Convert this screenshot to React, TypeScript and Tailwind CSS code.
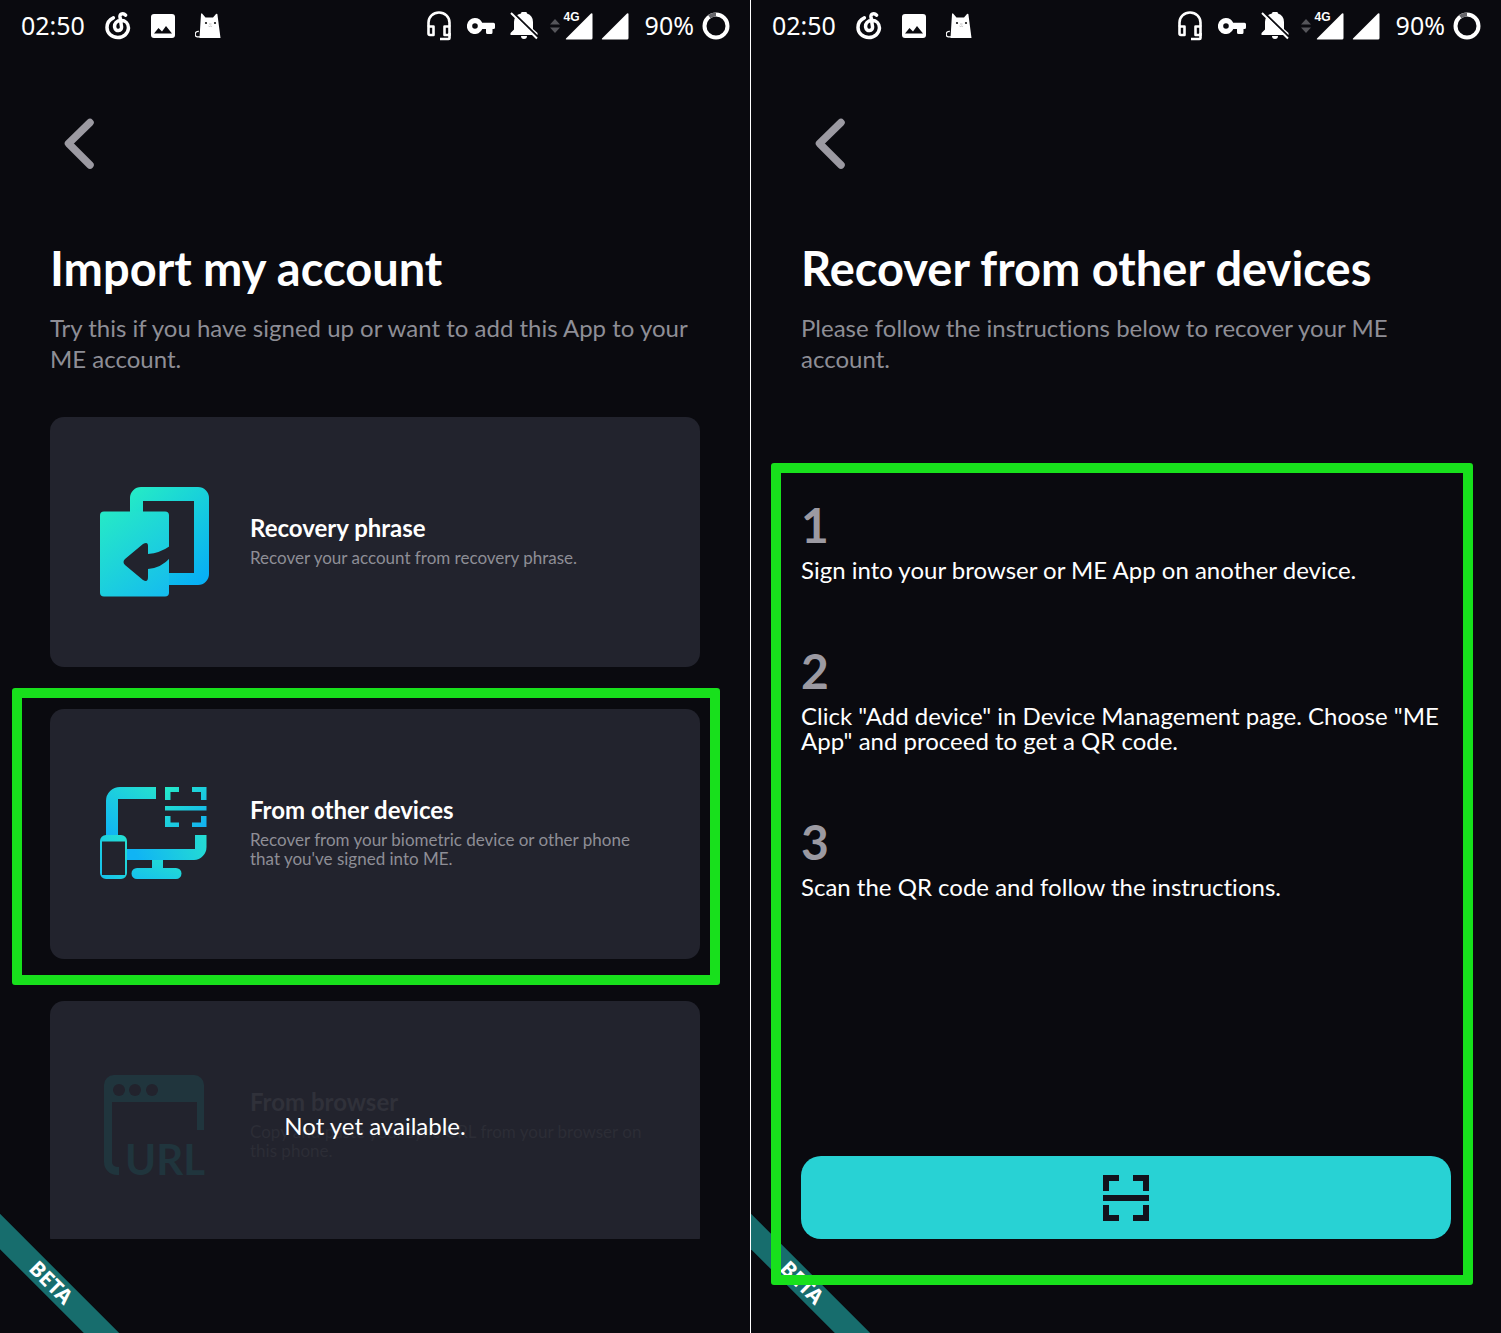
import type { ReactNode } from "react";

function MusicIcon() {
  return (
    <svg className="h-7 w-[26px]" viewBox="0 0 26 28" fill="none" stroke="#fff" strokeWidth="3.500" strokeLinecap="round" aria-hidden="true">
      <path d="M20.500 3.200C18.500.8 14.600 1.600 15 5L16.500 14.500C17.200 19.500 10.500 20 9.700 15.500C9 11.500 12 8.300 16 8.300C20.500 8.500 23.500 11.800 23.500 16C23.200 21.500 18.500 25.500 12.800 25.500C6.500 25.500 2 21 2 15.500C2 11 4.500 7.500 8.300 5.800" />
    </svg>
  );
}

function HeadsetIcon() {
  return (
    <svg className="h-[30px] w-6" viewBox="0 0 24 30" fill="none" stroke="#fff" strokeWidth="2.600" aria-hidden="true">
      <path d="M1.500 15.500V11.500a10.500 10 0 0 1 21 0v4" />
      <path d="M1.500 15.500H6.500v8.500H3a1.500 1.500 0 0 1-1.500-1.500z" strokeLinejoin="round" />
      <path d="M22.500 15.500H17.500v8.500h5z" strokeLinejoin="round" />
      <path d="M22.500 22v5a1 1 0 0 1-1 1H13" />
    </svg>
  );
}

function KeyIcon() {
  return (
    <svg className="h-4 w-7" viewBox="0 0 28 16" aria-hidden="true">
      <path
        fill="#fff"
        fillRule="evenodd"
        d="M8 0a8 8 0 0 1 7.200 4.800H26.500a1.500 1.500 0 0 1 1.500 1.500v3.200a1.500 1.500 0 0 1-1.500 1.500H25.500v3.500a1.500 1.500 0 0 1-1.500 1.500h-3.500a1.500 1.500 0 0 1-1.500-1.500V11h-3.700A8 8 0 1 1 8 0zM8 5.200a2.800 2.800 0 1 0 0 5.600a2.800 2.800 0 0 0 0-5.600z"
      />
    </svg>
  );
}

function BellOffIcon() {
  return (
    <svg className="h-7 w-7" viewBox="0 0 28 28" aria-hidden="true">
      <path
        fill="#fff"
        d="M11 1.500a3 2 0 0 1 6 0A9 9 0 0 1 23 10V17l4.500 4v2H0.500v-2l3.500-3.500V10A9 9 0 0 1 11 1.500zM11 24h6a3 3 0 0 1-6 0z"
      />
      <path d="M3 0.500L29 26" stroke="#0a0a0f" strokeWidth="2" />
      <path d="M1 1L27 26.500" stroke="#fff" strokeWidth="2" />
    </svg>
  );
}

function CatIcon() {
  return (
    <svg className="h-[26px] w-[26px]" viewBox="0 0 26 26" aria-hidden="true">
      <path fill="#fff" d="M6 1.200Q6.500-.5 7.500 1L10.500 4.500h7.500L21 1Q22.500 0 22.500 2L25.500 25H4.500Z" />
      <path d="M3.800 18.500a2.600 2.600 0 1 0-1.500 5.400H8" fill="none" stroke="#fff" strokeWidth="1.300" />
      <circle cx="11" cy="10" r="1.100" fill="#111" />
      <circle cx="20" cy="10" r="1.100" fill="#111" />
      <path d="M14 11h2.500M13.500 13q1 1 1.800 0q.8 1 1.800 0" stroke="#999" strokeWidth=".6" fill="none" />
    </svg>
  );
}

function PictureIcon() {
  return (
    <svg className="h-6 w-6" viewBox="0 0 24 24" aria-hidden="true">
      <rect width="24" height="24" rx="3" fill="#fff" />
      <path d="M3 19.500l4.500-5.500 3.500 3.500 4-5.500 6 7.500z" fill="#0a0a0f" />
    </svg>
  );
}

function SignalIcon() {
  return (
    <svg className="h-7 w-7" viewBox="0 0 28 28" aria-hidden="true">
      <path d="M1 26.500L26 1.500q1.500-1 1.500 1V26a1.500 1.500 0 0 1-1.500 1.500H1.500q-1.300 0-.5-1z" fill="#fff" />
    </svg>
  );
}

function StatusBar() {
  return (
    <header className="flex h-[51px] shrink-0 items-center justify-between pr-5 pl-[21px] font-['Noto_Sans'] text-[25px] leading-none text-white">
      <div className="flex items-center gap-5">
        <time>02:50</time>
        <MusicIcon />
        <PictureIcon />
        <CatIcon />
      </div>
      <div className="flex items-center">
        <HeadsetIcon />
        <span className="ml-4 flex">
          <KeyIcon />
        </span>
        <span className="ml-[15px] flex">
          <BellOffIcon />
        </span>
        <svg className="ml-3 h-[14px] w-[10px]" viewBox="0 0 10 14" fill="#55555a" aria-hidden="true">
          <path d="M5 0l5 5.500H0zM5 14l5-5.500H0z" />
        </svg>
        <span className="relative flex pl-[5px]">
          <SignalIcon />
          <span className="absolute top-0 left-1 font-['Liberation_Sans'] text-[12px] leading-[10px] font-bold">4G</span>
        </span>
        <span className="ml-2 flex">
          <SignalIcon />
        </span>
        <span className="ml-4">90%</span>
        <svg className="ml-2 h-7 w-7" viewBox="0 0 28 28" fill="none" strokeWidth="4" aria-hidden="true">
          <circle cx="14" cy="14" r="11.500" stroke="#fff" />
          <path d="M7.200 4.700A11.500 11.500 0 0 1 14 2.500" stroke="#66666b" />
        </svg>
      </div>
    </header>
  );
}

function ScanGlyph({ className }: { className: string }) {
  return (
    <svg className={className} viewBox="0 0 46 46" fill="#12121c" aria-hidden="true">
      <path d="M0 0h16v6H6v10H0zM46 0H30v6h10v10h6zM0 46h16v-6H6V30H0zM46 46H30v-6h10V30h6zM0 20h46v6H0z" />
    </svg>
  );
}

function RecoveryIcon() {
  return (
    <svg className="h-[110px] w-[110px]" viewBox="0 0 110 110" aria-hidden="true">
      <defs>
        <linearGradient id="recoverySheet" gradientUnits="userSpaceOnUse" x1="20" y1="15" x2="95" y2="110">
          <stop offset="0" stopColor="#25e8c8" />
          <stop offset="1" stopColor="#12b4f5" />
        </linearGradient>
        <linearGradient id="recoveryFrame" gradientUnits="userSpaceOnUse" x1="35" y1="0" x2="110" y2="85">
          <stop offset="0" stopColor="#25ebc6" />
          <stop offset="1" stopColor="#08b0f4" />
        </linearGradient>
      </defs>
      <path
        fill="url(#recoveryFrame)"
        fillRule="evenodd"
        d="M30 40V11A11 11 0 0 1 41 0H98A11 11 0 0 1 109 11V87A11 11 0 0 1 98 98H60V86H94V14H43V40Z"
      />
      <rect y="24.500" width="69" height="85" rx="4" fill="url(#recoverySheet)" />
      <path
        fill="#22232d"
        d="M25 72L43 57q5-3 5 2v8q12-1 22-8V71q-9 10-22 11v8q0 6-5 3L25 78q-3-3 0-6z"
      />
    </svg>
  );
}

function DevicesIcon() {
  return (
    <svg className="h-[110px] w-[110px]" viewBox="0 0 110 110" aria-hidden="true">
      <defs>
        <linearGradient id="monitorArm" gradientUnits="userSpaceOnUse" x1="50" y1="5" x2="15" y2="60">
          <stop offset="0" stopColor="#25e0d0" />
          <stop offset="1" stopColor="#10b4f4" />
        </linearGradient>
        <linearGradient id="monitorBase" gradientUnits="userSpaceOnUse" x1="105" y1="55" x2="40" y2="85">
          <stop offset="0" stopColor="#25ddd2" />
          <stop offset="1" stopColor="#10b4f4" />
        </linearGradient>
        <linearGradient id="monitorStand" x1="1" y1="0" x2="0" y2="1">
          <stop offset="0" stopColor="#25e0d0" />
          <stop offset="1" stopColor="#15c0ee" />
        </linearGradient>
        <linearGradient id="scanMarks" x1="0" y1="0" x2="1" y2="1">
          <stop offset="0" stopColor="#25ebc8" />
          <stop offset="1" stopColor="#12b0f2" />
        </linearGradient>
      </defs>
      <path fill="url(#monitorArm)" d="M6 60V22A14 14 0 0 1 20 8H56V20H18V60Z" />
      <path fill="url(#monitorBase)" d="M27 70H95V56H106.500V68A13 13 0 0 1 94 81H27Z" />
      <path fill="url(#monitorStand)" d="M52 81H63V89H76A5.500 5.500 0 0 1 76 100H37A5.500 5.500 0 0 1 37 89H52Z" />
      <path
        fill="url(#monitorStand)"
        fillRule="evenodd"
        d="M6 56H21A6 6 0 0 1 27 62V94A6 6 0 0 1 21 100H6A6 6 0 0 1 0 94V62A6 6 0 0 1 6 56ZM2 62.500V96H25V62.500Z"
      />
      <path
        fill="url(#scanMarks)"
        d="M65 8H79V13H70.500V21H65ZM106.500 8H92V13H101V21H106.500ZM65 48H79V43.500H70.500V37H65ZM106.500 48H92V43.500H101V37H106.500ZM65 27H106.500V31.500H65Z"
      />
    </svg>
  );
}

function BrowserIcon() {
  return (
    <svg className="h-[110px] w-[110px]" viewBox="0 0 110 110" fill="#20353d" aria-hidden="true">
      <path d="M4 14A10 10 0 0 1 14 4H94A10 10 0 0 1 104 14V59H97V31H12V91Q12 96 19 96V104H17A13 13 0 0 1 4 91Z" />
      <g fill="#22232d">
        <circle cx="19" cy="19" r="6" />
        <circle cx="35" cy="19" r="6" />
        <circle cx="52" cy="19" r="6" />
      </g>
      <text x="25" y="104" fontSize="42" fontWeight="700" fontFamily="Lato, sans-serif">
        URL
      </text>
    </svg>
  );
}

function BetaRibbon() {
  return (
    <div className="absolute bottom-[38px] left-[-49px] flex h-[25px] w-[200px] rotate-45 items-center justify-center bg-[#176d6d] font-['Noto_Sans'] text-[21px] leading-none font-bold text-white">
      BETA
    </div>
  );
}

function Highlight({ className }: { className: string }) {
  return <div className={"pointer-events-none absolute rounded-[3px] border-[10px] border-[#18e01c] " + className} />;
}

function Screen({ title, intro, children }: { title: string; intro: string; children: ReactNode }) {
  return (
    <section className="relative flex min-h-0 min-w-0 flex-col overflow-hidden bg-[#0a0a0f] pb-[94px]">
      <StatusBar />
      <div className="px-[50px] pt-[67px]">
        <button type="button" aria-label="Back" className="ml-[14px] block">
          <svg className="h-[51px] w-[30px]" viewBox="0 0 30 51" fill="none" aria-hidden="true">
            <path d="M26 4.500L4.500 25.500L26 47" stroke="#9c9aa2" strokeWidth="7.500" strokeLinecap="round" strokeLinejoin="round" />
          </svg>
        </button>
        <h1 className="mt-[69px] text-[47px] leading-[60px] font-bold whitespace-nowrap text-white">{title}</h1>
        <p className="mt-[14px] text-[24px] leading-[31px] text-[#8e8e96]">{intro}</p>
      </div>
      {children}
      <BetaRibbon />
    </section>
  );
}

function OptionCard({
  icon,
  title,
  text,
  disabled = false,
  highlighted = false,
}: {
  icon: ReactNode;
  title: string;
  text: string;
  disabled?: boolean;
  highlighted?: boolean;
}) {
  return (
    <li className="relative shrink-0">
      <button
        type="button"
        disabled={disabled}
        className="flex h-[250px] w-full items-center gap-10 rounded-[14px] bg-[#22232d] px-[50px] text-left"
      >
        <span className="shrink-0">{icon}</span>
        <span className={"pb-[5px] " + (disabled ? "text-[#30313a]" : "text-white")}>
          <span className="block text-[24px] leading-[30px] font-bold">{title}</span>
          <span className={"mt-[5px] block text-[17px] leading-[19px] " + (disabled ? "text-[#2c2d36]" : "text-[#8e8e96]")}>
            {text}
          </span>
        </span>
      </button>
      {disabled && (
        <span className="absolute inset-0 flex items-center justify-center text-[24px] text-white">Not yet available.</span>
      )}
      {highlighted && <Highlight className="-top-[21px] right-[-20px] -bottom-[26px] left-[-38px]" />}
    </li>
  );
}

const steps = [
  "Sign into your browser or ME App on another device.",
  'Click "Add device" in Device Management page. Choose "ME App" and proceed to get a QR code.',
  "Scan the QR code and follow the instructions.",
];

export default function App() {
  return (
    <main className="grid h-screen grid-cols-2 grid-rows-1 gap-px bg-white font-['Lato',sans-serif] [font-variant-ligatures:none]">
      <Screen title="Import my account" intro="Try this if you have signed up or want to add this App to your ME account.">
        <ul className="mt-[43px] flex min-h-0 flex-1 flex-col gap-[42px] overflow-hidden px-[50px]">
          <OptionCard icon={<RecoveryIcon />} title="Recovery phrase" text="Recover your account from recovery phrase." />
          <OptionCard
            icon={<DevicesIcon />}
            title="From other devices"
            text="Recover from your biometric device or other phone that you've signed into ME."
            highlighted
          />
          <OptionCard
            icon={<BrowserIcon />}
            title="From browser"
            text="Copy and paste your sync URL from your browser on this phone."
            disabled
          />
        </ul>
      </Screen>
      <Screen title="Recover from other devices" intro="Please follow the instructions below to recover your ME account.">
        <div className="relative z-10 mt-[89px] flex flex-1 flex-col px-[50px] pt-[32px]">
          <ol className="flex flex-col gap-[59px] text-[24px] leading-[25px] text-white">
            {steps.map((step, index) => (
              <li key={step}>
                <div className="text-[48px] leading-[60px] font-bold text-[#9c9aa2]">{index + 1}</div>
                <p className="mt-[2px]">{step}</p>
              </li>
            ))}
          </ol>
          <button
            type="button"
            aria-label="Scan QR code"
            className="mt-auto flex h-[83px] w-full items-center justify-center rounded-[20px] bg-[#28d2d4]"
          >
            <ScanGlyph className="h-[46px] w-[46px]" />
          </button>
          <Highlight className="top-0 right-[28px] -bottom-[46px] left-5" />
        </div>
      </Screen>
    </main>
  );
}
